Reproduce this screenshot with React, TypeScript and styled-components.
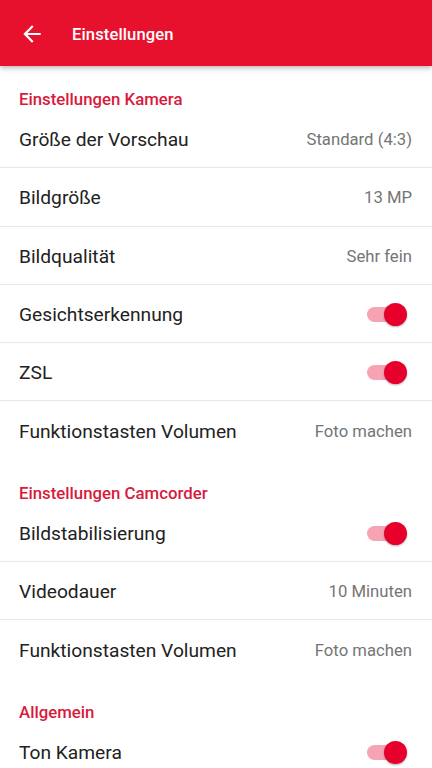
import React from 'react';
import styled, {createGlobalStyle} from 'styled-components';

const RED = '#e8112d';

const GlobalStyle = createGlobalStyle`
  html, body {
    margin: 0;
    padding: 0;
    background: #ffffff;
    font-family: Roboto, "Noto Sans", "Liberation Sans", sans-serif;
  }
  * { box-sizing: border-box; }
`;

type Item = {
    label: string,
    value?: string,
    toggle?: boolean,
}

type Section = {
    title: string,
    items: Item[],
}

const sections: Section[] = [
    {
        title: 'Einstellungen Kamera',
        items: [
            {label: 'Größe der Vorschau', value: 'Standard (4:3)'},
            {label: 'Bildgröße', value: '13 MP'},
            {label: 'Bildqualität', value: 'Sehr fein'},
            {label: 'Gesichtserkennung', toggle: true},
            {label: 'ZSL', toggle: true},
            {label: 'Funktionstasten Volumen', value: 'Foto machen'},
        ]
    },
    {
        title: 'Einstellungen Camcorder',
        items: [
            {label: 'Bildstabilisierung', toggle: true},
            {label: 'Videodauer', value: '10 Minuten'},
            {label: 'Funktionstasten Volumen', value: 'Foto machen'},
        ]
    },
    {
        title: 'Allgemein',
        items: [
            {label: 'Ton Kamera', toggle: true},
        ]
    },
];

const BackArrow = () => (
    <svg width="26" height="26" viewBox="0 0 24 24" fill="#ffffff">
        <path d="M20 11H7.83l5.59-5.59L12 4l-8 8 8 8 1.41-1.41L7.83 13H20v-2z"/>
    </svg>
);

const App: React.FC = () => {
    return (
        <Page>
            <GlobalStyle/>
            <Toolbar>
                <BackButton><BackArrow/></BackButton>
                <Title>Einstellungen</Title>
            </Toolbar>
            <List>
                {sections.map((section) => (
                    <div key={section.title}>
                        <SectionTitle>{section.title}</SectionTitle>
                        {section.items.map((item, i) => (
                            <Row key={item.label + i} $last={i === section.items.length - 1}>
                                <Label>{item.label}</Label>
                                {item.toggle ? (
                                    <Switch $on={true}/>
                                ) : (
                                    <Value>{item.value}</Value>
                                )}
                            </Row>
                        ))}
                    </div>
                ))}
            </List>
        </Page>
    );
};

export default App;

const Page = styled.div`
  width: 432px;
  height: 768px;
  overflow: hidden;
  background: #ffffff;
`;

const Toolbar = styled.header`
  height: 66px;
  background: ${RED};
  display: flex;
  align-items: center;
  box-shadow: 0 2px 5px rgba(0, 0, 0, 0.28);
  position: relative;
  z-index: 1;
`;

const BackButton = styled.div`
  width: 72px;
  padding-left: 19px;
  display: flex;
  align-items: center;
  height: 100%;
  padding-top: 1px;
`;

const Title = styled.div`
  color: #ffffff;
  font-size: 16.6px;
  font-weight: 500;
  letter-spacing: 0.1px;
  padding-top: 2px;
`;

const List = styled.div`
  display: flex;
  flex-direction: column;
`;

const SectionTitle = styled.div`
  height: 44px;
  padding: 23px 19px 0;
  line-height: 21px;
  font-size: 16.8px;
  font-weight: 500;
  color: #d81a3c;
`;

const Row = styled.div<{ $last?: boolean }>`
  height: 58.3px;
  padding: 2px 20px 0 19px;
  display: flex;
  align-items: center;
  justify-content: space-between;
  border-bottom: 1px solid ${({$last}) => $last ? 'transparent' : '#e8e8e8'};
`;

const Label = styled.div`
  font-size: 19.2px;
  color: #222222;
`;

const Value = styled.div`
  font-size: 16.7px;
  color: #757575;
`;

const Switch = styled.div<{ $on?: boolean }>`
  position: relative;
  width: 40px;
  height: 23px;
  margin-right: 5px;
  &::before {
    content: "";
    position: absolute;
    left: 0;
    top: 4px;
    width: 37px;
    height: 15px;
    border-radius: 8px;
    background: ${({$on}) => $on ? '#f6a3b3' : '#bdbdbd'};
  }
  &::after {
    content: "";
    position: absolute;
    top: 0;
    ${({$on}) => $on ? 'right: 0;' : 'left: 0;'}
    width: 23px;
    height: 23px;
    border-radius: 50%;
    background: ${({$on}) => $on ? '#e6002b' : '#f5f5f5'};
    box-shadow: 0 1px 2px rgba(0, 0, 0, 0.3);
  }
`;
